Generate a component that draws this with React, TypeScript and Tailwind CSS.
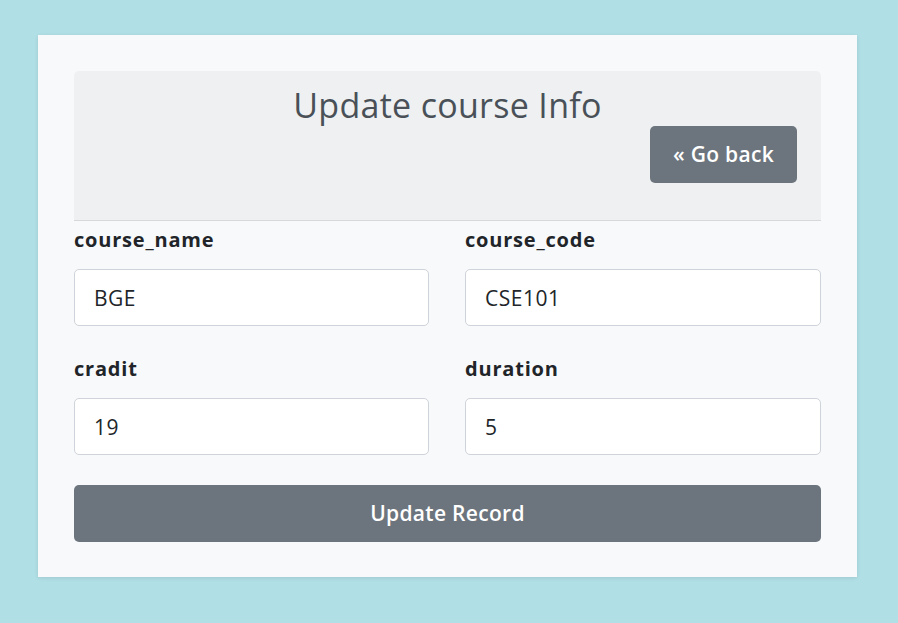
import React from 'react';

const fields = [
  { label: 'course_name', value: 'BGE' },
  { label: 'course_code', value: 'CSE101' },
  { label: 'cradit', value: '19' },
  { label: 'duration', value: '5' },
];

export default function App() {
  return (
    <div
      className="min-h-[623px] w-full bg-[#b0dfe5] pt-[35px] pl-[38px]"
      style={{ fontFamily: '"Open Sans", "Noto Sans", sans-serif' }}
    >
      <div className="w-[819px] bg-[#f8f9fa] px-[36px] pt-[36px] pb-[35px] shadow-[0_1px_4px_rgba(0,0,0,0.1)]">
        {/* Header */}
        <div className="h-[150px] rounded-t-[5px] bg-[#eff0f2] border-b border-[#d6d8db] pt-[14px] px-[24px] flex flex-col">
          <h1 className="text-center text-[34px] leading-[40px] text-[#495057] tracking-[0.3px]">Update course Info</h1>
          <div className="flex justify-end mt-[1px]">
            <button className="h-[57px] w-[147px] rounded-[5px] bg-[#6c757d] text-white text-[21px] font-semibold tracking-[0.3px]">
              « Go back
            </button>
          </div>
        </div>

        {/* Fields */}
        <div className="grid grid-cols-[355px_356px] gap-x-[36px] gap-y-[28px] pt-[4px]">
          {fields.map((f) => (
            <div key={f.label} className="flex flex-col">
              <label className="text-[20px] leading-[30px] font-bold text-[#212529] tracking-[0.8px]">{f.label}</label>
              <input
                readOnly
                value={f.value}
                className="mt-[14px] h-[57px] rounded-[5px] border border-[#ced4da] bg-white px-[19px] text-[21px] text-[#212529] tracking-[0.5px] outline-none"
              />
            </div>
          ))}
        </div>

        <button className="mt-[30px] h-[57px] w-full rounded-[5px] bg-[#6c757d] text-white text-[21px] font-semibold tracking-[0.3px]">
          Update Record
        </button>
      </div>
    </div>
  );
}
